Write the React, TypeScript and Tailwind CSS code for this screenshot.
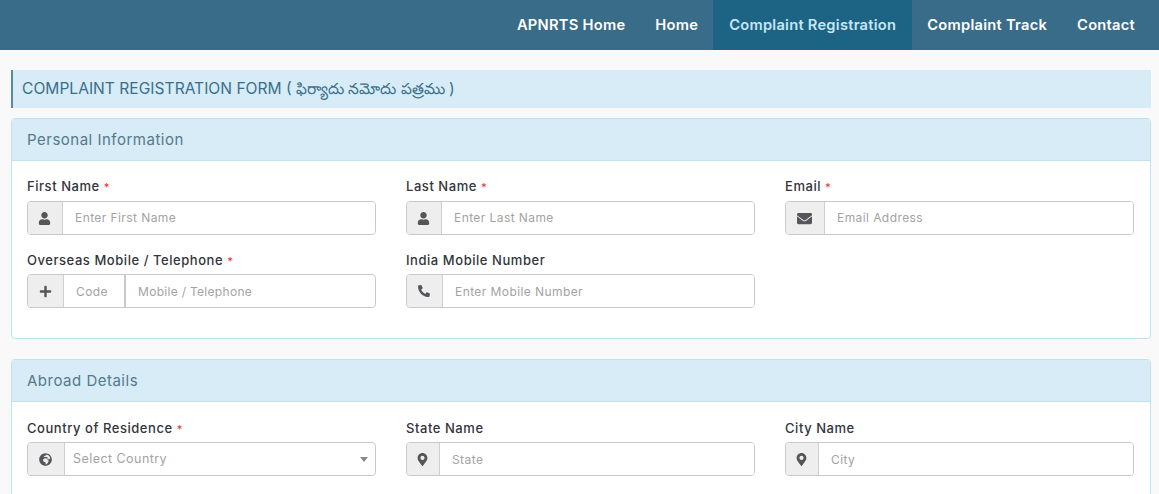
import type { ReactNode } from 'react';
import { FaEnvelope, FaGlobeAfrica, FaMapMarkerAlt, FaPhoneAlt, FaPlus, FaUser } from 'react-icons/fa';

const navItems = ['APNRTS Home', 'Home', 'Complaint Registration', 'Complaint Track', 'Contact'];

function Label({ text, required }: { text: string; required?: boolean }) {
  return (
    <label className="block h-[18px] text-[13px] leading-[18px] font-medium tracking-[0.55px] text-[#33353a]">
      {text}
      {required ? <span className="ml-1 text-[11px] text-[#e03a3a]">*</span> : null}
    </label>
  );
}

function Addon({ width, children }: { width: string; children: ReactNode }) {
  return (
    <span className={`flex shrink-0 items-center justify-center border-r border-[#cfcfcf] bg-[#eeeeee] pr-px text-[#55555a] ${width}`}>
      {children}
    </span>
  );
}

function Field(props: {
  label: string;
  required?: boolean;
  placeholder: string;
  addonWidth: string;
  icon: ReactNode;
  tight?: boolean;
}) {
  return (
    <div>
      <Label text={props.label} required={props.required} />
      <div className={`flex h-[34px] overflow-hidden rounded border border-[#c9c9c9] bg-white ${props.tight ? 'mt-[5px]' : 'mt-[6px]'}`}>
        <Addon width={props.addonWidth}>{props.icon}</Addon>
        <input
          placeholder={props.placeholder}
          className={`min-w-0 flex-1 bg-white px-3 text-[12px] tracking-[0.42px] text-[#555] outline-none placeholder:text-[#a3a3a3] ${props.tight ? 'pt-px' : ''}`}
        />
      </div>
    </div>
  );
}

function Panel({ title, children }: { title: string; children: ReactNode }) {
  return (
    <section className="rounded border border-[#bfe2ee] bg-white">
      <div className="flex h-[42px] items-center border-b border-[#bfe2ee] bg-[#d7ecf6] px-[15px] pt-[2px] text-[15px] tracking-[0.5px] text-[#55798c]">
        {title}
      </div>
      {children}
    </section>
  );
}

export default function App() {
  return (
    <div className="h-[494px] overflow-hidden bg-[#f9f9f9] font-['Inter','Noto_Sans',sans-serif]">
      <nav className="flex h-[50px] justify-end bg-[#386c88] pr-[9px]">
        {navItems.map((item) => (
          <a
            key={item}
            className={`flex items-center text-[14.7px] font-semibold tracking-[0.25px] ${
              item === 'Complaint Registration' ? 'bg-[#1d6384] px-[16px] text-[#c5e6f5]' : 'px-[15px] text-white'
            }`}
          >
            {item}
          </a>
        ))}
      </nav>

      <div className="pr-2 pl-[11px]">
        <h1 className="mt-5 flex h-[38px] items-center border-l-2 border-[#5b8a9f] bg-[#d7ecf6] pl-[9px] text-[15.6px] font-normal text-[#3a6f8c]">
          <span>
            COMPLAINT REGISTRATION FORM ( <span className="text-[15.3px]">ఫిర్యాదు నమోదు పత్రము</span> )
          </span>
        </h1>

        <div className="mt-[10px]">
          <Panel title="Personal Information">
            <div className="grid grid-cols-[349px_349px_349px] gap-x-[30px] gap-y-[16px] px-[15px] pt-[16px] pb-[30px]">
              <Field label="First Name" required placeholder="Enter First Name" addonWidth="w-[35px]" icon={<FaUser className="size-[13px]" />} />
              <Field label="Last Name" required placeholder="Enter Last Name" addonWidth="w-[35px]" icon={<FaUser className="size-[13px]" />} />
              <Field label="Email" required placeholder="Email Address" addonWidth="w-[39px]" icon={<FaEnvelope className="size-[15px]" />} />
              <div>
                <Label text="Overseas Mobile / Telephone" required />
                <div className="mt-[5px] flex h-[34px] overflow-hidden rounded border border-[#c9c9c9] bg-white">
                  <Addon width="w-[36px]"><FaPlus className="size-[13px]" /></Addon>
                  <input
                    placeholder="Code"
                    className="w-[62px] shrink-0 border-r-2 border-[#c9c9c9] px-3 pt-px text-[12px] tracking-[0.42px] outline-none placeholder:text-[#a3a3a3]"
                  />
                  <input
                    placeholder="Mobile / Telephone"
                    className="min-w-0 flex-1 px-3 pt-px text-[12px] tracking-[0.3px] outline-none placeholder:text-[#a3a3a3]"
                  />
                </div>
              </div>
              <Field tight label="India Mobile Number" placeholder="Enter Mobile Number" addonWidth="w-[36px]" icon={<FaPhoneAlt className="size-[12px]" />} />
            </div>
          </Panel>
        </div>

        <div className="mt-5">
          <Panel title="Abroad Details">
            <div className="grid grid-cols-[349px_349px_349px] gap-x-[30px] px-[15px] pt-[17px] pb-[30px]">
              <div>
                <Label text="Country of Residence" required />
                <div className="mt-[5px] flex h-[34px] overflow-hidden rounded border border-[#c9c9c9] bg-white">
                  <Addon width="w-[37px]"><FaGlobeAfrica className="size-[13px]" /></Addon>
                  <div className="flex flex-1 items-center justify-between pr-[7px] pl-2 text-[12.5px] tracking-[0.45px] text-[#a3a3a3]">
                    Select Country
                    <span className="border-x-4 border-t-[5px] border-x-transparent border-t-[#888]" />
                  </div>
                </div>
              </div>
              <Field tight label="State Name" placeholder="State" addonWidth="w-[33px]" icon={<FaMapMarkerAlt className="size-[13px]" />} />
              <Field tight label="City Name" placeholder="City" addonWidth="w-[33px]" icon={<FaMapMarkerAlt className="size-[13px]" />} />
            </div>
          </Panel>
        </div>
      </div>
    </div>
  );
}
